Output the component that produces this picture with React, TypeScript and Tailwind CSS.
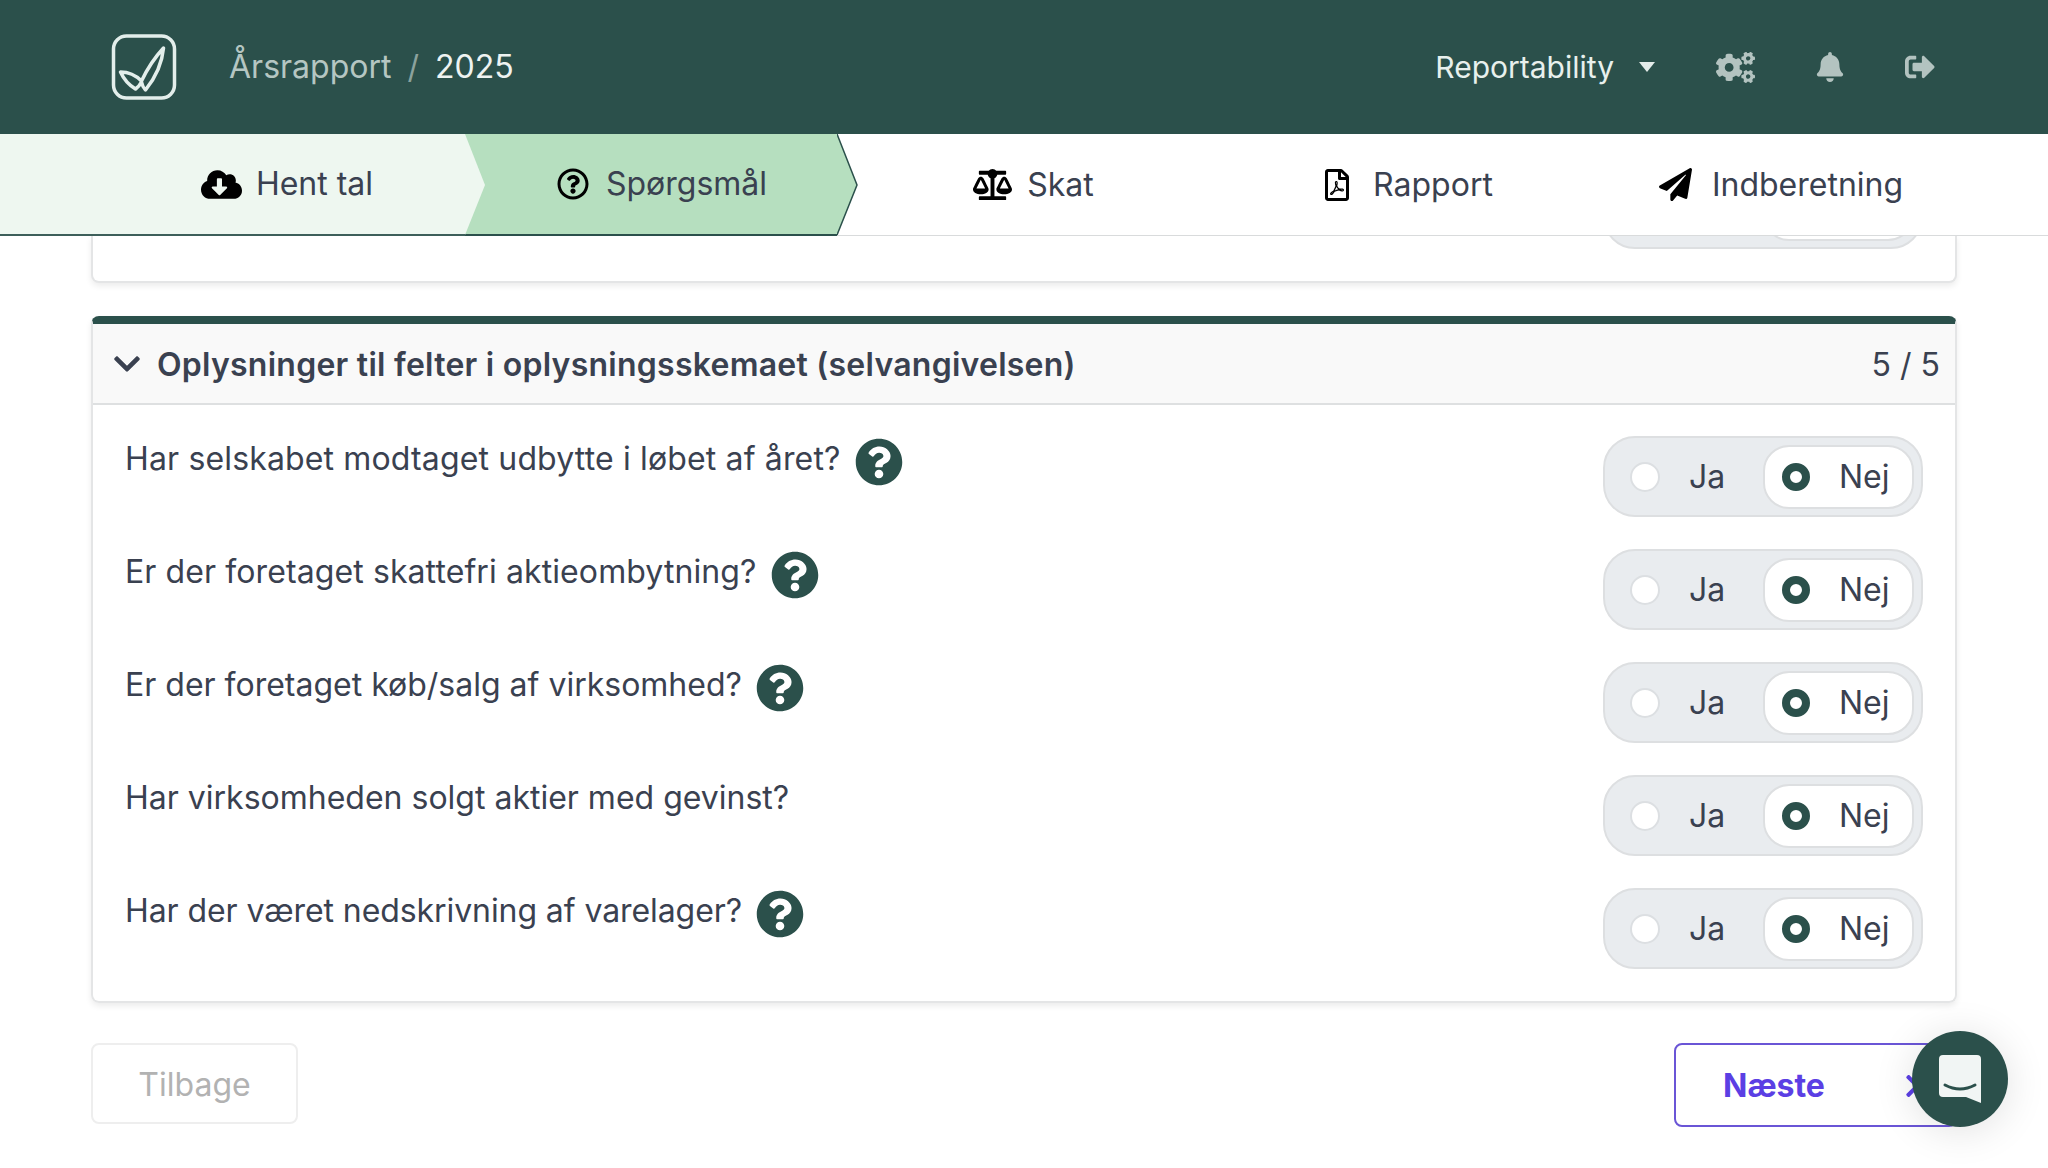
import React from "react";
import {
  FaBalanceScale,
  FaBell,
  FaChevronDown,
  FaChevronRight,
  FaCloudDownloadAlt,
  FaCogs,
  FaPaperPlane,
  FaQuestionCircle,
  FaRegFilePdf,
  FaRegQuestionCircle,
  FaSignOutAlt,
} from "react-icons/fa";

const questions = [
  { text: "Har selskabet modtaget udbytte i løbet af året?", help: true, spacing: "tracking-[0.15px]" },
  { text: "Er der foretaget skattefri aktieombytning?", help: true, spacing: "tracking-[0.1px]" },
  { text: "Er der foretaget køb/salg af virksomhed?", help: true, spacing: "tracking-[0px]" },
  { text: "Har virksomheden solgt aktier med gevinst?", help: false, spacing: "tracking-[0px]" },
  { text: "Har der været nedskrivning af varelager?", help: true, spacing: "tracking-[-0.08px]" },
];

const Logo = () => (
  <svg width="66" height="66" viewBox="0 0 65 66" fill="none" stroke="#e3eeeb" className="shrink-0">
    <rect x="2" y="2" width="61" height="62" rx="13" strokeWidth="3.5" />
    <path
      d="M9 38 Q21 38 30 47 Q39 28 52 14 Q50 36 34 56 Q31 53 30 48 Q28 52 24 55 Q14 49 9 38 Z"
      strokeWidth="3.5"
      strokeLinejoin="round"
    />
  </svg>
);

const Tip = ({ fill, stroke }: { fill: string; stroke?: string }) => (
  <svg width="21" height="102" viewBox="0 0 21 102" className="absolute top-0 left-full z-10">
    <path d="M0 0 L20 51 L0 101" fill={fill} stroke={stroke ?? "none"} strokeWidth="1.5" />
  </svg>
);

const YesNo = ({ className, labels = true }: { className?: string; labels?: boolean }) => (
  <div
    className={
      "flex h-[81px] w-[320px] shrink-0 items-center rounded-[32px] border-2 border-[#dddfe1] bg-[#e9ecef] pr-[7px] text-[#3a4150] " +
      (className ?? "")
    }
  >
    <div className="flex flex-1 items-center pl-[25px]">
      <span className="h-[30px] w-[30px] rounded-full border-2 border-[#dcdfe2] bg-white" />
      {labels && <span className="ml-[29px]">Ja</span>}
    </div>
    <div className="flex h-[64px] w-[151px] items-center rounded-[26px] border-2 border-[#dddfe1] bg-white pl-[17px]">
      <span className="h-[28px] w-[28px] rounded-full border-[8px] border-[#2b504b] bg-white" />
      {labels && <span className="ml-[29px]">Nej</span>}
    </div>
  </div>
);

export default function App() {
  return (
    <div className="relative h-[1168px] w-[2048px] overflow-hidden bg-white font-['Inter',sans-serif] text-[32px] leading-[44px] text-[#3a4150]">
      <header className="flex h-[134px] items-center bg-[#2b504b] pl-[111px] pr-[113px]">
        <Logo />
        <div className="ml-[52px] flex items-center">
          <span className="text-[#b5c6c2]">Årsrapport</span>
          <span className="mx-[16px] text-[#8ba29d]">/</span>
          <span className="text-[#eef3f1]">2025</span>
        </div>
        <div className="ml-auto flex items-center">
          <span className="text-[30px] text-[#e8f0ed]">Reportability</span>
          <span className="ml-[25px] h-0 w-0 border-x-[8px] border-t-[10px] border-x-transparent border-t-[#e3ebe9]" />
          <FaCogs className="ml-[61px] text-[39px] text-[#b3c3c0]" />
          <FaBell className="ml-[60px] text-[30px] text-[#b3c3c0]" />
          <FaSignOutAlt className="ml-[60px] text-[30px] text-[#b3c3c0]" />
        </div>
      </header>

      <nav className="relative z-20 flex h-[102px] border-b border-[#d9dbdc] bg-white">
        <div className="relative flex h-[102px] w-[465px] items-center justify-center gap-[14px] border-b-2 border-[#3d5f5a] bg-[#eef7f0] pl-[109px]">
          <FaCloudDownloadAlt className="text-[41px] text-black" />
          Hent tal
          <Tip fill="#eef7f0" />
        </div>
        <div className="relative flex h-[102px] w-[372px] items-center justify-center gap-[17px] border-b-2 border-[#2b504b] bg-[#b6dfbf] pl-[22px]">
          <FaRegQuestionCircle className="text-[32px] text-black" />
          Spørgsmål
          <Tip fill="#b6dfbf" stroke="#2b504b" />
        </div>
        <div className="flex w-[372px] items-center justify-center gap-[15px] pl-[21px]">
          <FaBalanceScale className="text-[39px] text-black" />
          Skat
        </div>
        <div className="flex w-[372px] items-center justify-center gap-[20px] pl-[24px]">
          <FaRegFilePdf className="text-[32px] text-black" />
          Rapport
        </div>
        <div className="flex w-[372px] items-center justify-center gap-[20px] pl-[28px]">
          <FaPaperPlane className="text-[33px] text-black" />
          Indberetning
        </div>
      </nav>

      <main className="px-[91px]">
        <div className="flex h-[47px] justify-end overflow-hidden rounded-b-lg border-x-2 border-b-2 border-[#e4e5e6] bg-white pr-[32px] shadow-[0_3px_6px_rgba(0,0,0,0.08)]">
          <YesNo className="-mt-[68px]" labels={false} />
        </div>

        <section className="mt-[33px] overflow-hidden rounded-lg border-x-2 border-b-2 border-t-[8px] border-[#e4e5e6] border-t-[#2b504b] shadow-[0_3px_6px_rgba(0,0,0,0.08)]">
          <div className="flex h-[81px] items-center border-b-2 border-[#dee0e1] bg-[#f9f9f9] pl-[19px] pr-[15px]">
            <FaChevronDown className="text-[30px] text-[#3a4150]" />
            <h2 className="ml-[15px] pt-[2px] font-semibold tracking-[0.25px]">Oplysninger til felter i oplysningsskemaet (selvangivelsen)</h2>
            <span className="ml-auto pt-[2px]">5 / 5</span>
          </div>
          <div className="pb-[32px] pl-[32px] pr-[32px] pt-[31px]">
            {questions.map((q, i) => (
              <div key={q.text} className={"flex justify-between " + (i > 0 ? "mt-[32px]" : "")}>
                <div className="flex items-start gap-[14px] pt-[1px]">
                  <span className={q.spacing}>{q.text}</span>
                  {q.help && <FaQuestionCircle className="mt-[1px] text-[48px] text-[#2b504b]" />}
                </div>
                <YesNo />
              </div>
            ))}
          </div>
        </section>

        <div className="mt-[40px] flex items-start justify-between">
          <button className="h-[81px] w-[207px] rounded-lg border-2 border-[#eeeeee] pt-[2px] text-[#b2b2b2]">Tilbage</button>
          <button className="flex h-[84px] w-[283px] items-center rounded-lg border-2 border-[#6a55d6] pl-[47px] pt-[2px] font-bold text-[#5b3fe4]">
            Næste
            <FaChevronRight className="ml-[75px] text-[26px]" />
          </button>
        </div>
      </main>

      <div className="absolute left-[1912px] top-[1031px] z-30 flex h-[96px] w-[96px] items-center justify-center rounded-full bg-[#2b504b] shadow-[0_4px_40px_rgba(0,0,0,0.12)]">
        <svg width="42" height="48" viewBox="0 0 42 48">
          <path d="M4 0 H38 Q42 0 42 4 V48 L27 42 H4 Q0 42 0 38 V4 Q0 0 4 0 Z" fill="#f1f5f4" />
          <path d="M6 30 Q21 38 36 30" fill="none" stroke="#2b504b" strokeWidth="3" strokeLinecap="round" />
        </svg>
      </div>
    </div>
  );
}
